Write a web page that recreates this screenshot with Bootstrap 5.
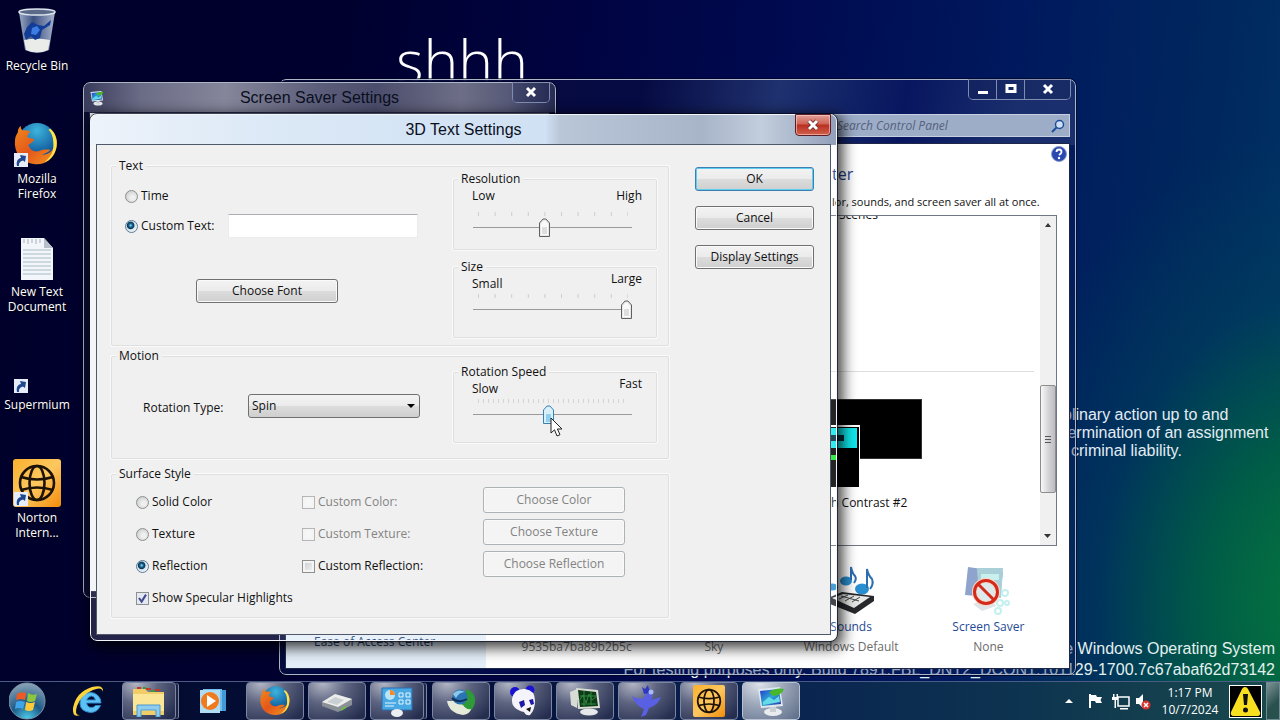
<!DOCTYPE html>
<html lang="en">
<head>
<meta charset="utf-8">
<meta name="viewport" content="width=device-width, initial-scale=1">
<title>3D Text Settings</title>
<link href="https://cdn.jsdelivr.net/npm/bootstrap@5.3.0/dist/css/bootstrap.min.css" rel="stylesheet">
<style>
  :root { --ui: "Open Sans", "Noto Sans", sans-serif; --arial: "Liberation Sans", Arial, sans-serif; }
  body { font: 12px/16px var(--ui); color: #111; background: #00002c; }
  .desktop {
    background:
      radial-gradient(ellipse 360px 480px at 104% 84%, #067a3c 0%, rgba(0,100,66,.85) 35%, rgba(0,70,90,.45) 65%, rgba(0,60,90,0) 100%),
      linear-gradient(97deg, #00002b 0%, #00002e 25%, #000340 42%, #000a50 58%, #00195e 75%, #00285e 90%, #003468 100%);
  }
  a { color: inherit; text-decoration: none; }

  /* desktop contents */
  .shortcuts { width: 74px; padding-top: 7px; grid-auto-rows: 113px; color: #fff; line-height: 15px; text-shadow: 0 1px 2px #000; }
  .shortcuts svg { margin-bottom: 3px; }
  .shout { left: 396px; top: 16px; font: 300 59px/88px var(--ui); color: #fff; }
  .notice { left: 1063px; top: 406px; font: 16px/18px var(--arial); color: #e4ecf4; white-space: nowrap; }
  .watermark { right: 5px; bottom: 40px; font: 16px/21px var(--arial); color: #e4f0ee; white-space: nowrap; text-align: right; }

  /* window frames */
  .win { border: 1px solid #a9b6cc; border-radius: 7px; outline: 1px solid rgba(0,0,20,.6); }
  .client { border: 1px solid #20284a; }
  .title-text { font: 16px/20px var(--arial); }
  .cap-btns { top: -1px; border: 1px solid #7d8cb0; border-top: 0; border-radius: 0 0 5px 5px; }
  .cap-btns button { border: 0; background: rgba(20,30,80,.25); height: 20px; padding: 0; display: flex; align-items: center; justify-content: center; }
  .cap-btns button + button { border-left: 1px solid #7d8cb0; }

  .panel-win { inset: 79px 204px 45px 279px; padding: 0 5px 5px;
    background: linear-gradient(100deg, rgba(8,12,60,.92) 0, rgba(6,10,66,.92) 45%, rgba(40,60,120,.75) 62%, rgba(8,22,96,.85) 78%, rgba(30,50,112,.85) 92%) top / 100% 65px no-repeat, rgba(10,30,90,.35); }
  .panel-head { height: 63px; padding: 34px 0 0; }
  .search { width: 239px; height: 23px; background: #9dadc8; border: 1px solid #c6d0e2; }
  .search input { background: none; border: 0; outline: 0; width: 100%; padding: 0 0 0 5px; font: italic 12px/20px var(--ui); color: #4e5a78; }
  .search input::placeholder { color: #56617c; opacity: 1; }
  .side { width: 200px; background: linear-gradient(#fff, #e3eef9); padding: 0 0 18px 28px; color: #1b3a6b; }
  .main-pane { padding: 19px 12px 0 22px; background: #fff; }
  .past { margin-left: 324px; white-space: nowrap; }
  .pane-title { font-size: 16px; line-height: 22px; color: #1f3a86; }
  .pane-note { font-size: 11px; line-height: 16px; margin-top: 9px; height: 17px; }
  .theme-list { margin-top: 4px; border: 1px solid #707684; }
  .theme-scroll { width: 16px; background: #f0f0f0; }
  .theme-thumb { height: 108px; margin-top: 152px; border: 1px solid #8d8d8d; border-radius: 2px; background: linear-gradient(90deg, #f8f8f8, #d0d0d4 60%, #bcbcc2); }
  .theme-rule { height: 1px; background: #dedede; margin: 148px 6px 0 0; }
  .theme-item { width: 140px; margin: 27px 0 0 273px; }
  .links { height: 122px; padding-top: 20px; grid-template-columns: repeat(4, 1fr); line-height: 20px; text-align: center; }
  .links > div { padding-top: 51px; position: relative; }
  .links svg { position: absolute; top: 0; left: 50%; margin-left: -25px; }
  .links a { color: #1f4a96; display: block; height: 20px; }
  .links span { color: #6b6b6b; }

  .saver-win { inset: 82px 724px 122px 83px; padding: 0 5px 5px;
    background: linear-gradient(90deg, #3a3c5c 0, #6a6c86 12%, #85869a 30%, #5b5d7a 50%, #4b4d6c 62%, #6d6e86 80%, #575a78 90%, #272b52 100%) top / 100% 29px no-repeat, rgba(12,14,50,.9); }
  .saver-win .client { background: #f3f4f6; }

  .text-win { inset: 114px 443px auto 90px; padding: 0 5px 5px; border-color: #f0f6fc; background: linear-gradient(90deg, #edf3fa 0, #dbe8f6 25%, #d0e1f3 61%, #b9c6d8 63%, #a8b4c8 82%, #c2cedd 90%, #93a0ba 100%) top / 100% 30px no-repeat, rgba(255,255,255,.14);
    box-shadow: 3px 4px 14px 3px rgba(0,0,0,.75); }
  .text-win .client { background: #f0f0f0; padding: 15px 16px 16px 14px; gap: 26px; border-color: #50586c; }
  .bar { height: 29px; color: #0a0f1e; }
  .red-close { right: 5px; top: -1px; width: 36px; height: 22px; padding: 0; border: 1px solid #5b1e28; box-shadow: inset 0 0 0 1px rgba(255,210,200,.6); border-radius: 0 0 4px 4px; background: linear-gradient(#e0a098 0, #cf6254 45%, #b92f22 50%, #d2604a 100%); }

  /* dialog controls */
  fieldset.grp { border: 1px solid #dfdfdf; border-radius: 2px; box-shadow: 0 0 0 1px #fafafa; }
  legend.cap { float: none; width: auto; font-size: 12px; line-height: 12px; margin: 0 0 0 4px; padding: 0 3px; background: #f0f0f0; }
  .sub { height: 77px; }
  .sub .ends { height: 17px; padding: 0 14px 0 18px; line-height: 12px; }
  .sub svg { display: block; margin: 3px 0 0 20px; }
  .g-text { height: 186px; } .g-motion { height: 109px; margin-top: 4px; } .g-surf { height: 150px; margin-top: 9px; }
  .slides { width: 204px; margin-right: 11px; }
  .wbtn { font-size: 12px; line-height: 16px; padding: 0; height: 24px; color: #111; border: 1px solid #707070; border-radius: 3px; background: linear-gradient(#f3f3f3 0, #ebebeb 48%, #dcdcdc 52%, #cfcfcf 100%); box-shadow: inset 0 0 0 1px #fafafa; }
  .wbtn.main { border-color: #3c7fb1; box-shadow: inset 0 0 0 1px #5fcdee; }
  .wbtn:disabled { height: 26px; color: #838383; border-color: #adb2b5; background: #f4f4f4; }
  .side-btns { width: 119px; gap: 15px; padding-top: 7px; }
  .rad, .chk { appearance: none; width: 13px; height: 13px; margin: 0; flex: none; border: 1px solid #8e8f8f; background: radial-gradient(circle at 60% 60%, #f0f0f0 20%, #c6c8ca 90%); }
  .rad { border-radius: 50%; }
  .rad:checked { border-color: #5b7a92; background: radial-gradient(circle at 42% 40%, #9fe0f6 0, #1c6a96 18%, #0b3555 36%, #cfe0ea 46%, #eef4f8 70%); }
  .chk { box-shadow: inset 0 0 0 2px #f4f4f4; background: linear-gradient(135deg, #c8ccd0, #f4f4f4); }
  .chk:disabled { background: #f6f6f6; border-color: #b6b6b6; }
  .chk:checked { background: #e4e8f2 url("data:image/svg+xml,%3Csvg xmlns='http://www.w3.org/2000/svg' viewBox='0 0 11 11'%3E%3Cpath d='M2 5l2.6 3.6L9 1.6' fill='none' stroke='%23404a8c' stroke-width='2'/%3E%3C/svg%3E") center / 11px no-repeat; box-shadow: none; }
  .pick { display: flex; align-items: center; gap: 3px; white-space: nowrap; }
  .off { color: #838383; }
  .line-in { height: 24px; width: 190px; border: 1px solid #ececec; border-top-color: #abadb3; background: #fff; padding: 0 4px; }
  .pull { width: 172px; height: 24px; border: 1px solid #707070; border-radius: 3px; font-size: 12px; padding: 0 3px; appearance: none; color: #111;
    background: url("data:image/svg+xml,%3Csvg xmlns='http://www.w3.org/2000/svg' width='8' height='4'%3E%3Cpath d='M0 0h8L4 4z' fill='%23000'/%3E%3C/svg%3E") right 4px center no-repeat, linear-gradient(#f3f3f3 0, #ebebeb 48%, #dcdcdc 52%, #cfcfcf 100%); }
  .slide { appearance: none; display: block; width: 159px; height: 20px; margin: 0 0 0 19px; background: linear-gradient(#9a9a9a, #9a9a9a) center / 100% 1px no-repeat; }
  .slide::-webkit-slider-thumb { appearance: none; width: 11px; height: 19px; background: url("data:image/svg+xml,%3Csvg xmlns='http://www.w3.org/2000/svg' width='11' height='19'%3E%3Cpath d='M.5 18.5V5L4 1h3l3.500 4v13.500z' fill='%23e8e8e8' stroke='%23606060'/%3E%3Cpath d='M2 17V6l2.500-3h2L9 6v11z' fill='%23fafafa'/%3E%3Cpath d='M3 9h5v7H3z' fill='%23dedede'/%3E%3C/svg%3E"); }
  .slide.hot::-webkit-slider-thumb { background: url("data:image/svg+xml,%3Csvg xmlns='http://www.w3.org/2000/svg' width='11' height='19'%3E%3Cpath d='M.5 18.5V5L4 1h3l3.500 4v13.500z' fill='%23d8f0fa' stroke='%233c7fb1'/%3E%3Cpath d='M3 9h5v8H3z' fill='%238fd0ee'/%3E%3C/svg%3E"); }
  .surf-grid { padding: 7px 0 0 24px; grid-template-columns: 166px 181px 142px; grid-auto-rows: 32px; align-items: start; }
  .surf-grid .pick { height: 30px; }
  .pointer { left: 550px; top: 417px; }

  /* taskbar */
  .taskbar { height: 39px; border-top: 1px solid #4b5c84; background: linear-gradient(90deg, #02092c 0, #040f38 35%, #0a2350 60%, #0d3450 80%, #1a4a4c 100%); }
  .task { width: 58px; height: 38px; padding: 0; border: 1px solid transparent; border-radius: 4px; background: none; display: flex; align-items: center; justify-content: center; }
  .task.open { border-color: #7c86a0; background: radial-gradient(ellipse at 25% 0, #b3b7c6 0, #5d6480 40%, #262e50 90%); }
  .task.stack { width: 54px; margin-right: 4px; box-shadow: 3px 0 0 -1px #1c2444, 4px 0 0 -1px #7c86a0; }
  .task.front { background: radial-gradient(ellipse at 30% 0, #dfe4ec 0, #9aa5b8 45%, #5c6c88 100%); border-color: #b8c2d2; }
  .tray { color: #fff; }
  .clock { width: 70px; line-height: 17px; }
  .warn { width: 33px; height: 33px; border: 1px solid #fff; background: #000; }
  .peek { width: 14px; height: 38px; border: 1px solid #6f8a90; background: linear-gradient(135deg, #7d9496, #28504c 60%); padding: 0; }
</style>
</head>
<body>
<svg width="0" height="0" class="position-absolute" aria-hidden="true">
  <defs>
    <linearGradient id="gOr" x1="0" y1="0" x2="1" y2="1"><stop offset="0" stop-color="#f9b02c"/><stop offset=".5" stop-color="#fdc860"/><stop offset="1" stop-color="#f28c0a"/></linearGradient>
    <linearGradient id="gFox" x1="0" y1="0" x2="1" y2="1"><stop offset="0" stop-color="#f08a1c"/><stop offset=".5" stop-color="#e4561a"/><stop offset="1" stop-color="#f39a22"/></linearGradient>
    <radialGradient id="gGlobe" cx=".5" cy=".2" r=".9"><stop offset="0" stop-color="#3db4dc"/><stop offset=".6" stop-color="#1665a4"/><stop offset="1" stop-color="#0b2a66"/></radialGradient>
    <linearGradient id="gBin" x1="0" x2="1"><stop offset="0" stop-color="#9aaac4"/><stop offset=".4" stop-color="#3c5080"/><stop offset="1" stop-color="#a8b4cc"/></linearGradient>
    <radialGradient id="gOrb" cx=".5" cy="1" r="1"><stop offset="0" stop-color="#4fd0ee"/><stop offset=".45" stop-color="#1d5a86"/><stop offset="1" stop-color="#8ca4b8"/></radialGradient>
    <linearGradient id="gScr" x1="0" y1="0" x2="1" y2="1"><stop offset="0" stop-color="#2038c8"/><stop offset=".5" stop-color="#2fa7d6"/><stop offset="1" stop-color="#2d2aa0"/></linearGradient>
  </defs>
  <symbol id="arrow" viewBox="0 0 14 14"><path d="M0 0h14v14H0z" fill="#e6ecf8"/><path d="M3 13C2 8 4 5.500 7 5L6 2l6 1-1 6-2-1.500C6 8.500 4.500 10 5 13z" fill="#20488e"/></symbol>
  <symbol id="norton" viewBox="0 0 48 48"><rect width="48" height="48" rx="3" fill="url(#gOr)"/><g fill="none" stroke="#1c1206" stroke-width="2.600"><circle cx="24" cy="24" r="17"/><ellipse cx="24" cy="24" rx="7.500" ry="17"/><path d="M8 18q16 5 32 0M8 31q16-5 32 0"/></g></symbol>
  <symbol id="firefox" viewBox="0 0 48 48"><circle cx="25" cy="22" r="20" fill="url(#gGlobe)"/><path d="M39 8c6 5 8 13 6 21-3 11-12 17-22 16C11 44 3 36 2 25c0-5 0-9 3-13 0-3 1-5 3-7 0 3 1 4 2 5 3-1 6 0 8 1-2 2-3 4-3 6l7 2c0 3-4 4-6 6 2 6 7 8 12 6 5-2 9-1 11-1-2 3-6 4-9 5 9 0 14-6 14-14 0-6-2-10-5-13z" fill="url(#gFox)"/><path d="M39 8c6 5 8 13 6 21-2 7-6 12-12 14 7-6 10-12 9-21 0-6-2-10-5-13z" fill="#ffe34a"/></symbol>
  <symbol id="screen" viewBox="0 0 32 32"><ellipse cx="18" cy="27" rx="9" ry="4" fill="#e8ecee"/><path d="M15 20h6v7h-6z" fill="#c8ced4"/><path d="M3 4l22-2 3 19-22 2z" fill="#dfe8ee"/><path d="M5 6l19-2 2 15-19 2z" fill="url(#gScr)"/><path d="M14 7q8-5 15-3-2 6-11 7z" fill="#48b828"/><path d="M8 17l6-5 5 3 5-4 1 6-17 3z" fill="#66dbe8"/></symbol>
</svg>

<div class="desktop position-relative vh-100 overflow-hidden d-flex flex-column justify-content-between">

  <nav class="shortcuts d-grid text-center" aria-label="Desktop">
    <a href="#"><svg width="48" height="48" viewBox="0 0 48 48"><path d="M6 5l6 38q12 6 24 0l6-38z" fill="url(#gBin)"/><path d="M11 33q12-3 26 0l-2 10q-11 5-22 0z" fill="#e9ece8"/><path d="M14 20l5-5 6 3 6 1 7-6-1 5-8 5-2 8-5 2-4-4-5 4-2-6z" fill="#123c98"/><path d="M19 21l5-2 3 4-4 5-5-1z" fill="#3d7ce0"/><ellipse cx="24" cy="5" rx="18" ry="3" fill="#5a6a88" stroke="#dde4ee" stroke-width="1.500"/></svg><br>Recycle Bin</a>
    <a href="#"><svg width="48" height="48"><use href="#firefox" width="46" height="46" x="0" y="1"/><use href="#arrow" x="1" y="33" width="14" height="14"/></svg><br>Mozilla Firefox</a>
    <a href="#"><svg width="48" height="48" viewBox="0 0 48 48"><path d="M8 5h23l9 10v32H8z" fill="#f2f6fa"/><path d="M31 5v10h9z" fill="#b7c0ca"/><path d="M10 17h28M10 21h28M10 25h28M10 29h28M10 33h28M10 37h28M10 41h28" stroke="#a9b9c6"/><path d="M11 6v4M15 6v5M19 6v4M23 6v5M27 6v4" stroke="#ccd3da" stroke-width="2"/></svg><br>New Text Document</a>
    <a href="#"><svg width="48" height="48"><use href="#arrow" x="1" y="33" width="14" height="14"/></svg><br>Supermium</a>
    <a href="#"><svg width="48" height="48"><use href="#norton" width="48" height="48"/><use href="#arrow" x="1" y="33" width="14" height="14"/></svg><br>Norton Intern...</a>
  </nav>

  <div class="shout position-absolute">shhh</div>
  <div class="notice position-absolute">plinary action up to and<br>termination of an assignment<br>l criminal liability.</div>
  <div class="watermark position-absolute">e Windows Operating System<br>For testing purposes only. Build 7891.FBL_DNT2_DCON1.101129-1700.7c67abaf62d73142</div>

  <!-- Control Panel -->
  <section class="win panel-win position-absolute d-flex flex-column" aria-label="Personalization">
    <div class="cap-btns position-absolute end-0 me-1 d-flex">
      <button style="width:27px" aria-label="Minimize"><svg width="12" height="12"><path d="M1 8h10v3H1z" fill="#fff"/></svg></button>
      <button style="width:28px" aria-label="Maximize"><svg width="12" height="12"><path d="M2 2.500h8v6H2z" fill="none" stroke="#fff" stroke-width="3"/></svg></button>
      <button style="width:46px" aria-label="Close"><svg width="12" height="12"><path d="M2 2l8 8M10 2l-8 8" stroke="#fff" stroke-width="3"/></svg></button>
    </div>
    <div class="panel-head d-flex justify-content-end">
      <div class="search d-flex align-items-center">
        <input type="text" placeholder="Search Control Panel" aria-label="Search Control Panel">
        <svg class="me-1 flex-shrink-0" width="14" height="14" viewBox="0 0 14 14"><circle cx="8.500" cy="5.500" r="4" fill="#cfe0f4" stroke="#1c4c9c" stroke-width="1.500"/><path d="M5.500 8.500L1 13" stroke="#1c4c9c" stroke-width="2"/></svg>
      </div>
    </div>
    <div class="client flex-grow-1 d-flex overflow-hidden position-relative">
      <svg class="position-absolute top-0 end-0 m-1 mt-0" width="14" height="20" viewBox="0 0 14 20" overflow="visible"><circle cx="8" cy="10" r="7.500" fill="#2a48b0" stroke="#8c9cc8"/><path d="M5.500 8Q5.500 5.500 8 5.500T10.500 8Q10.500 9.500 8 11" fill="none" stroke="#fff" stroke-width="1.800"/><circle cx="8" cy="14" r="1.200" fill="#fff"/></svg>
      <div class="side d-flex align-items-end flex-shrink-0"><a href="#">Ease of Access Center</a></div>
      <div class="main-pane flex-grow-1 d-flex flex-column">
        <div class="pane-title past">ter</div>
        <div class="pane-note past">lor, sounds, and screen saver all at once.</div>
        <div class="theme-list flex-grow-1 d-flex overflow-hidden">
          <div class="flex-grow-1">
            <div style="margin:-9px 0 0 330px">Scenes</div>
            <div class="theme-rule"></div>
            <div class="theme-item text-center">
              <svg width="140" height="88" class="d-block"><path d="M0 0h140v60H0z" fill="#333"/><path d="M1 1h138v58H1z"/><path d="M18 26h60v62H18z" fill="#fff"/><path d="M19 28h58v60H19z"/><path d="M22 29h53v20H22z" fill="#10e8ec"/><path d="M40 36h22v6H40z" fill="#04283a"/><path d="M44 56h11v5H44z" fill="#18e828"/></svg>
              <div class="mt-1 pt-1 ps-3">High Contrast #2</div>
            </div>
          </div>
          <div class="theme-scroll d-flex flex-column text-center">
            <svg width="16" height="17"><path d="M5 11l3-4 3 4z" fill="#333"/></svg>
            <div class="theme-thumb d-flex align-items-center justify-content-center"><svg width="8" height="8"><path d="M1 1.500h6M1 4.500h6M1 7.500h6" stroke="#555"/></svg></div>
            <svg class="mt-auto" width="16" height="17"><path d="M4 6h7l-3.500 4z" fill="#333"/></svg>
          </div>
        </div>
        <div class="links d-grid">
          <div><a href="#"></a><span>9535ba7ba89b2b5c</span></div>
          <div><a href="#"></a><span>Sky</span></div>
          <div><svg width="50" height="50" viewBox="0 0 50 50"><g fill="#2a8fd0"><ellipse cx="20" cy="15" rx="6" ry="4.500"/><ellipse cx="36" cy="23" rx="7" ry="5.500"/><ellipse cx="6" cy="21" rx="6" ry="3.500"/></g><path d="M25 14V1q1 6 4 9 2 3-1 7" fill="none" stroke="#2a6fb0" stroke-width="2"/><path d="M41 22V3q1 6 5 10 2 5-2 10" fill="none" stroke="#2a6fb0" stroke-width="2"/><path d="M2 32l14-6 32 4v5L29 48 4 38z" fill="#26282c"/><path d="M6 32l11-4 27 3-16 11z" fill="#e8e8e6"/><path d="M15 30l18 5M22 29l-9 4M28 30l-9 5M34 31l-8 5" stroke="#44484c"/></svg><a href="#">Sounds</a><span>Windows Default</span></div>
          <div><svg width="50" height="50" viewBox="0 0 50 50"><path d="M5 1l35 5-3 26-35-3z" fill="#8fa4cc"/><path d="M14 2h26l-2 30H16z" fill="#a9cfd8"/><path d="M18 8h18v6H18z" fill="#c9f0ec"/><path d="M10 38l18-6 5 8-14 5z" fill="#dfe4e8"/><g fill="none" stroke="#c4f0f0" stroke-width="2"><circle cx="42" cy="27" r="3"/><circle cx="37" cy="37" r="3"/><circle cx="44" cy="37" r="2"/><circle cx="35" cy="45" r="3"/></g><circle cx="23" cy="26" r="11.500" fill="#dde9ea" stroke="#f6d8c8" stroke-width="5"/><circle cx="23" cy="26" r="11.500" fill="none" stroke="#d42a1c" stroke-width="3"/><path d="M15 18l16 16" stroke="#d42a1c" stroke-width="3"/></svg><a href="#">Screen Saver</a><span>None</span></div>
        </div>
      </div>
    </div>
  </section>

  <!-- Screen Saver Settings -->
  <section class="win saver-win position-absolute d-flex flex-column" aria-label="Screen Saver Settings">
    <div class="bar d-flex align-items-center justify-content-center position-relative">
      <svg class="position-absolute start-0" width="16" height="16"><use href="#screen"/></svg>
      <span class="title-text">Screen Saver Settings</span>
      <div class="cap-btns position-absolute end-0 me-n1"><button style="width:36px" aria-label="Close"><svg width="12" height="12"><path d="M2 2l8 8M10 2l-8 8" stroke="#fff" stroke-width="3"/></svg></button></div>
    </div>
    <div class="client flex-grow-1"></div>
  </section>

  <!-- 3D Text Settings -->
  <section class="win text-win position-absolute" aria-label="3D Text Settings">
    <div class="bar d-flex align-items-center justify-content-center"><span class="title-text">3D Text Settings</span></div>
    <button class="red-close position-absolute d-flex align-items-center justify-content-center" aria-label="Close"><svg width="14" height="12"><path d="M3 2l8 8M11 2l-8 8" stroke="#622" stroke-width="4.500"/><path d="M3 2l8 8M11 2l-8 8" stroke="#fff" stroke-width="3"/></svg></button>
    <form class="client d-flex">
      <div class="flex-grow-1">
        <fieldset class="grp g-text"><legend class="cap">Text</legend>
          <div class="d-flex justify-content-between">
            <div style="padding:12px 0 0 13px">
              <label class="pick" style="height:24px"><input class="rad" type="radio" name="src"> Time</label>
              <div class="d-flex align-items-center" style="margin-top:6px">
                <label class="pick" style="width:103px"><input class="rad" type="radio" name="src" checked> Custom Text:</label>
                <input class="line-in" type="text" aria-label="Custom Text">
              </div>
              <button type="button" class="wbtn d-block" style="width:142px;margin:41px 0 0 71px">Choose Font</button>
            </div>
            <div class="slides" style="padding-top:1px">
              <fieldset class="grp sub"><legend class="cap">Resolution</legend>
                <div class="ends d-flex justify-content-between align-items-end"><span>Low</span><span>High</span></div>
                <svg style="margin-top:9px" width="157" height="6" stroke="#cecece" stroke-dasharray="1 15.600"><path d="M4 3h150" stroke-width="4"/></svg>
                <input class="slide" type="range" min="0" max="9" value="4" aria-label="Resolution">
              </fieldset>
              <fieldset class="grp sub" style="margin-top:11px"><legend class="cap">Size</legend>
                <div class="ends d-flex justify-content-between"><span class="align-self-end">Small</span><span>Large</span></div>
                <svg width="157" height="6" stroke="#cecece" stroke-dasharray="1 15.600"><path d="M4 3h150" stroke-width="4"/></svg>
                <input class="slide" type="range" min="0" max="9" value="9" aria-label="Size">
              </fieldset>
            </div>
          </div>
        </fieldset>
        <fieldset class="grp g-motion"><legend class="cap">Motion</legend>
          <div class="d-flex justify-content-between">
            <div class="d-flex align-items-center" style="height:24px;margin:32px 0 0 31px">
              <label for="rot" class="pt-1" style="width:105px">Rotation Type:</label>
              <select class="pull" id="rot"><option>Spin</option></select>
            </div>
            <div class="slides" style="padding-top:4px">
              <fieldset class="grp sub"><legend class="cap">Rotation Speed</legend>
                <div class="ends d-flex justify-content-between"><span class="align-self-end">Slow</span><span>Fast</span></div>
                <svg width="157" height="6" stroke="#d4d4d4" stroke-dasharray="1 4"><path d="M4 3h150" stroke-width="4"/></svg>
                <input class="slide hot" type="range" min="0" max="100" value="47" aria-label="Rotation Speed">
              </fieldset>
            </div>
          </div>
        </fieldset>
        <fieldset class="grp g-surf"><legend class="cap">Surface Style</legend>
          <div class="surf-grid d-grid">
            <label class="pick"><input class="rad" type="radio" name="surf"> Solid Color</label>
            <label class="pick off"><input class="chk" type="checkbox" disabled> Custom Color:</label>
            <button type="button" class="wbtn" disabled>Choose Color</button>
            <label class="pick"><input class="rad" type="radio" name="surf"> Texture</label>
            <label class="pick off"><input class="chk" type="checkbox" disabled> Custom Texture:</label>
            <button type="button" class="wbtn" disabled>Choose Texture</button>
            <label class="pick"><input class="rad" type="radio" name="surf" checked> Reflection</label>
            <label class="pick"><input class="chk" type="checkbox"> Custom Reflection:</label>
            <button type="button" class="wbtn" disabled>Choose Reflection</button>
            <label class="pick"><input class="chk" type="checkbox" checked> Show Specular Highlights</label>
          </div>
        </fieldset>
      </div>
      <div class="side-btns d-flex flex-column flex-shrink-0">
        <button type="button" class="wbtn main">OK</button>
        <button type="button" class="wbtn">Cancel</button>
        <button type="button" class="wbtn">Display Settings</button>
      </div>
    </form>
  </section>

  <svg class="pointer position-absolute" width="14" height="21" viewBox="0 0 14 21"><path d="M1 1v15l3.500-3.200L7 19l3-1.300L7.400 12H12z" fill="#fff" stroke="#222"/></svg>

  <footer class="taskbar d-flex justify-content-between position-relative">
    <div class="d-flex gap-1">
      <button class="task" style="width:56px" aria-label="Start"><svg width="38" height="38" viewBox="0 0 38 38"><circle cx="18" cy="19" r="18" fill="url(#gOrb)" stroke="#7c93a8"/><path d="M8 12q4-3 9-1l-1 7q-5-2-9 0z" fill="#ee5a24"/><path d="M19 11q4 3 9 1l-2 7q-5 2-8 0z" fill="#8cc63e"/><path d="M7 20q4-2 9 0l-2 7q-4-2-8 0z" fill="#3fa4e8"/><path d="M17 20q5 2 9 0l-2 8q-4 2-8 0z" fill="#fbc93a"/></svg></button>
      <button class="task" aria-label="Internet Explorer"><svg width="34" height="34" viewBox="0 0 34 34"><path d="M8 19a10.500 10.500 0 1 1 21 0H14.500q1 4.500 5 4.500 3 0 4-2h5q-3 7-10 7-10.500-1-10.500-9.500zm6.500-3h9q-1-4-4-4t-5 4z" fill="#5cc2f4" stroke="#2f8ad0"/><path d="M31 8q-1-6-10-2Q9 11 5 22q-3 10 3 9-8 3-7-7Q4 8 20 3q12-3 11 5z" fill="#fbd43c"/></svg></button>
      <button class="task open stack" aria-label="Windows Explorer"><svg width="34" height="32" viewBox="0 0 34 32"><path d="M1 4h12l3 3h16v23H1z" fill="#f0cd68"/><path d="M1 9h31v17H1z" fill="#fbe596"/><path d="M5 3h4M14 4h5M23 5h5" stroke="#c0392b" stroke-width="2"/><path d="M11 3h3M19 6h4" stroke="#3a9a3a" stroke-width="2"/><path d="M5 20h23v12h-4v-7H9v7H5z" fill="#8fcdf0" stroke="#4a98cc"/></svg></button>
      <button class="task" aria-label="Media Player"><svg width="28" height="26" viewBox="0 0 28 26"><path d="M8 2h19v21H8z" fill="#3f9ad8"/><path d="M4 1h19v22H4z" fill="#72bdec"/><path d="M1 2h20v23H1z" fill="#aedcf5"/><circle cx="11" cy="13" r="9" fill="#f07a1e"/><path d="M8 7l9 6-9 6z" fill="#fff"/></svg></button>
      <button class="task open" aria-label="Firefox"><svg width="32" height="32"><use href="#firefox"/></svg></button>
      <button class="task open" aria-label="Drive"><svg width="32" height="24" viewBox="0 0 32 24"><path d="M1 13L14 5l17 5v6l-14 7-16-6z" fill="#8b9096"/><path d="M1 13L14 5l17 5-14 8z" fill="#eceeee"/><path d="M6 13l8-5 9 3-7 5z" fill="#c9cfd2"/><path d="M20 20l5-3v2l-5 3z" fill="#63c23c"/></svg></button>
      <button class="task open stack" aria-label="Control Panel"><svg width="34" height="32" viewBox="0 0 34 32"><path d="M2 3h30v22H2z" fill="#48a8e4" stroke="#2a6cae"/><circle cx="10" cy="10" r="5" fill="#b8e4f6"/><path d="M10 10V5a5 5 0 0 1 5 5z" fill="#f58a2a"/><path d="M19 8h4v4h-4zM26 8h4v4h-4zM19 15h4v4h-4zM26 15h4v4h-4zM5 18h11M5 21h9" stroke="#e4f4fc" fill="none"/><ellipse cx="17" cy="28" rx="6" ry="4" fill="#eceef2"/></svg></button>
      <button class="task open" aria-label="Globe"><svg width="32" height="30" viewBox="0 0 32 30"><path d="M22 3q9 4 8 13-1 8-9 12l-5-9z" fill="#2f9a38"/><path d="M2 15q2 12 16 14 7-1 8-6-5 1-8-4L8 15z" fill="#e6ead8"/><circle cx="15" cy="11" r="7.500" fill="#2b74b4"/><path d="M8 8q5-6 12-2-6 0-9 6z" fill="#8cc8ec"/><path d="M7 12q6 6 15 1" fill="none" stroke="#10305c" stroke-width="2"/></svg></button>
      <button class="task open" aria-label="Panda"><svg width="30" height="32" viewBox="0 0 30 32"><circle cx="7" cy="7" r="5" fill="#1a14d0"/><circle cx="22" cy="5" r="4.500" fill="#1a14d0"/><path d="M4 14q2-11 13-10 10 1 10 12 0 9-5 14-4 1-6-3Q3 24 4 14z" fill="#f4f4fa"/><path d="M11 17l5-2 1 5-4 3zM21 15l4-1 1 5-3 1z" fill="#1c18a8"/><path d="M18 24l5-2-1 5z" fill="#111"/></svg></button>
      <button class="task open" aria-label="System Monitor"><svg width="32" height="30" viewBox="0 0 32 30"><path d="M1 6l7-3v19l-6-3z" fill="#d8dcd4"/><ellipse cx="20" cy="26" rx="9" ry="3.500" fill="#e6e8ec"/><path d="M7 2l22 2 2 18-22 1z" fill="#d9ddd2"/><path d="M9 4l18 2 2 14-18 1z" fill="#0f3a18"/><path d="M10 15l4-6 3 8 3-9 3 6 4-3M11 10h16M12 18h15M15 5v15M22 6v13" fill="none" stroke="#2f8a40"/></svg></button>
      <button class="task open" aria-label="Bird"><svg width="34" height="32" viewBox="0 0 34 32"><path d="M2 11q6 4 12 2l2-4q1-2 4-2l3 4-2 4 10-3q-3 8-12 11l-3 7-5 2 3-8q-9-4-12-13z" fill="#5a60e4"/><path d="M12 2l3 2 3-4 1 4 3 2-3 2-5 1z" fill="#3038c0"/><circle cx="21" cy="7" r="2.500" fill="#a8b8f8"/></svg></button>
      <button class="task open" aria-label="Norton"><svg width="32" height="32"><use href="#norton"/></svg></button>
      <button class="task open front" aria-label="Screen Saver Settings"><svg width="32" height="32"><use href="#screen"/></svg></button>
    </div>
    <div class="tray d-flex align-items-center">
      <svg width="96" height="24" viewBox="2 0 96 24" fill="#fff"><path d="M8 14l4-4 4 4z"/><path d="M32 5h2v14h-2zM34 6h5l1 2h5l-1.500 3 1.500 3h-6l-1-2h-4z"/><path d="M61 8h11v9H61z" fill="none" stroke="#fff" stroke-width="1.500"/><path d="M63 19h8v1.500h-8zM56 5h1.500v3H56zM59.500 5H61v3h-1.500zM55 8h6v3h-2v8h-1.500v-8H55z"/><path d="M79 9h3l4-4v14l-4-4h-3z"/><circle cx="89" cy="16" r="4.500" fill="#d8332c"/><path d="M87 14l4 4M91 14l-4 4" stroke="#fff" stroke-width="1.500"/></svg>
      <div class="clock text-center">1:17 PM<br>10/7/2024</div>
      <div class="warn me-1 ms-1"><svg class="d-block" width="31" height="31" viewBox="0 0 31 31"><path d="M15 1q2 0 3 2l12 23q1 3-2 4H3q-3-1-2-4L12 3q1-2 3-2z" fill="#f8e020"/><path d="M13 8h5l-1 11h-3z" fill="#111"/><circle cx="15.500" cy="24" r="2.500" fill="#111"/></svg></div>
      <button class="peek" aria-label="Show desktop"></button>
    </div>
  </footer>
</div>
<script src="https://cdn.jsdelivr.net/npm/bootstrap@5.3.0/dist/js/bootstrap.bundle.min.js"></script>
</body>
</html>
